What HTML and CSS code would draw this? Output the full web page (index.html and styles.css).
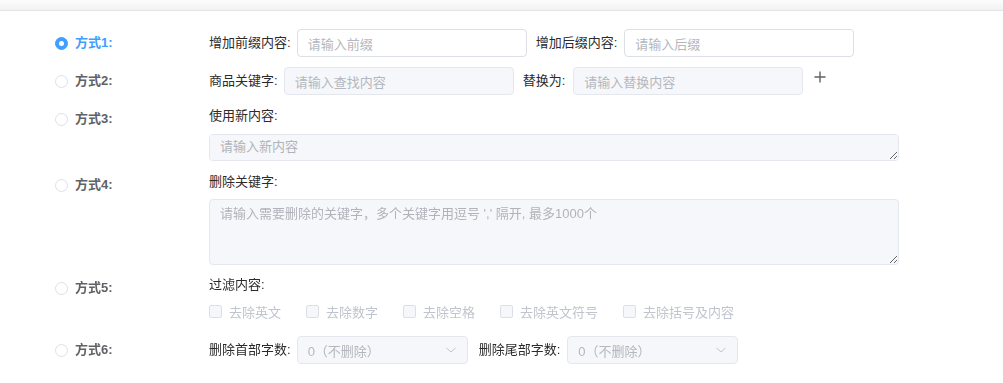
FILE: index.html
```html
<!DOCTYPE html>
<html lang="zh-CN">
<head>
<meta charset="utf-8">
<title>方式设置</title>
<link rel="stylesheet" href="styles.css">
</head>
<body>
<div class="topbar"></div>
<div class="form">
  <div class="row">
    <div class="opt"><span class="radio checked"></span><span class="opt-label active">方式1:</span></div>
    <div class="content line">
      <span class="label">增加前缀内容:</span>
      <div class="input"><span class="ph">请输入前缀</span></div>
      <span class="label gap">增加后缀内容:</span>
      <div class="input"><span class="ph">请输入后缀</span></div>
    </div>
  </div>
  <div class="row r2">
    <div class="opt"><span class="radio"></span><span class="opt-label">方式2:</span></div>
    <div class="content line">
      <span class="label">商品关键字:</span>
      <div class="input disabled"><span class="ph">请输入查找内容</span></div>
      <span class="label gap wide">替换为:</span>
      <div class="input disabled"><span class="ph">请输入替换内容</span></div>
      <svg class="plus" width="14" height="14" viewBox="0 0 14 14"><path d="M7 1.5V12.5M1.5 7H12.5" stroke="#606266" stroke-width="1.4" fill="none"/></svg>
    </div>
  </div>
  <div class="row r3">
    <div class="opt low"><span class="radio"></span><span class="opt-label">方式3:</span></div>
    <div class="content block">
      <div class="label-line">使用新内容:</div>
      <textarea class="ta ta-small" disabled placeholder="请输入新内容"></textarea>
    </div>
  </div>
  <div class="row r4">
    <div class="opt low"><span class="radio"></span><span class="opt-label">方式4:</span></div>
    <div class="content block">
      <div class="label-line">删除关键字:</div>
      <textarea class="ta ta-big" disabled placeholder="请输入需要删除的关键字，多个关键字用逗号 ',' 隔开, 最多1000个"></textarea>
    </div>
  </div>
  <div class="row r5">
    <div class="opt low"><span class="radio"></span><span class="opt-label">方式5:</span></div>
    <div class="content block">
      <div class="label-line">过滤内容:</div>
      <div class="checks">
        <span class="check"><span class="box"></span>去除英文</span>
        <span class="check"><span class="box"></span>去除数字</span>
        <span class="check"><span class="box"></span>去除空格</span>
        <span class="check"><span class="box"></span>去除英文符号</span>
        <span class="check"><span class="box"></span>去除括号及内容</span>
      </div>
    </div>
  </div>
  <div class="row r6">
    <div class="opt"><span class="radio"></span><span class="opt-label">方式6:</span></div>
    <div class="content line">
      <span class="label">删除首部字数:</span>
      <div class="select"><span class="ph">0（不删除）</span><svg class="chev" width="12" height="8" viewBox="0 0 12 8"><path d="M1.5 2L6 6L10.5 2" stroke="#c0c4cc" stroke-width="1" fill="none"/></svg></div>
      <span class="label gap2">删除尾部字数:</span>
      <div class="select"><span class="ph">0（不删除）</span><svg class="chev" width="12" height="8" viewBox="0 0 12 8"><path d="M1.5 2L6 6L10.5 2" stroke="#c0c4cc" stroke-width="1" fill="none"/></svg></div>
    </div>
  </div>
</div>
</body>
</html>
```
FILE: styles.css
```css
* { box-sizing: border-box; }
html, body { margin: 0; padding: 0; background: #fff; }
body {
  font-family: "Liberation Sans", "Noto Sans CJK SC", sans-serif;
  font-size: 13px;
  color: #2b2b2b;
}
.topbar {
  height: 11px;
  background: linear-gradient(#fcfcfc, #f2f2f3);
  border-bottom: 1px solid #e3e3e8;
}
.form { padding-top: 18px; }
.row { display: flex; align-items: flex-start; }
.r2 { margin-top: 10px; }
.r3 { margin-top: 7px; }
.r4 { margin-top: 7px; }
.r5 { margin-top: 6px; }
.r6 { margin-top: 15px; }
.opt {
  width: 209px;
  padding-left: 55px;
  height: 28px;
  display: flex;
  align-items: center;
  flex-shrink: 0;
}
.opt.low { margin-top: 3px; }
.radio {
  width: 13px;
  height: 13px;
  border: 1px solid #dcdfe6;
  border-radius: 50%;
  background: #fff;
  position: relative;
  flex-shrink: 0;
}
.radio.checked { background: #409eff; border-color: #409eff; }
.radio.checked::after {
  content: "";
  position: absolute;
  left: 50%; top: 50%;
  width: 5px; height: 5px;
  margin: -2.5px 0 0 -2.5px;
  border-radius: 50%;
  background: #fff;
}
.opt-label {
  margin-left: 7px;
  font-weight: bold;
  color: #606266;
  line-height: 20px;
}
.opt-label.active { color: #409eff; }
.content.line { display: flex; align-items: center; height: 28px; }
.content.block { display: flex; flex-direction: column; }
.label { color: #2b2b2b; white-space: nowrap; margin-right: 6px; line-height: 28px; }
.label.gap { margin-left: 9px; margin-right: 7px; }
.label.gap.wide { margin-right: 8px; }
.label.gap2 { margin-left: 11px; margin-right: 7px; }
.input {
  width: 230px;
  height: 28px;
  border: 1px solid #dcdfe6;
  border-radius: 4px;
  background: #fff;
  padding: 0 10px;
  display: flex;
  align-items: center;
}
.input.disabled { background: #f5f7fa; border-color: #e4e7ed; }
.ph { color: #b4b7be; white-space: nowrap; }
.plus { margin-left: 10px; margin-top: -8px; }
.label-line { line-height: 28px; height: 28px; color: #2b2b2b; }
.ta {
  display: block;
  width: 690px;
  border: 1px solid #e4e7ed;
  border-radius: 4px;
  background: #f5f7fa;
  padding: 5px 10px;
  font-family: "Liberation Sans", "Noto Sans CJK SC", sans-serif;
  font-size: 13px;
  line-height: 18px;
  color: #b0b3ba;
  resize: vertical;
  margin: 0;
}
.ta::placeholder { color: #b0b3ba; }
.ta-small { height: 27px; margin-top: 4px; padding-top: 3px; }
.ta-big { height: 66px; margin-top: 3px; }
.checks { display: flex; align-items: center; height: 20px; margin-top: 2px; }
.check { display: flex; align-items: center; color: #c0c4cc; margin-right: 25px; white-space: nowrap; }
.box {
  width: 13px; height: 13px;
  border: 1px solid #dcdfe6;
  background: #f5f7fa;
  border-radius: 2px;
  margin-right: 7px;
}
.select {
  width: 171px;
  height: 28px;
  border: 1px solid #e4e7ed;
  border-radius: 4px;
  background: #f5f7fa;
  padding: 0 10px;
  display: flex;
  align-items: center;
  justify-content: space-between;
}
```
